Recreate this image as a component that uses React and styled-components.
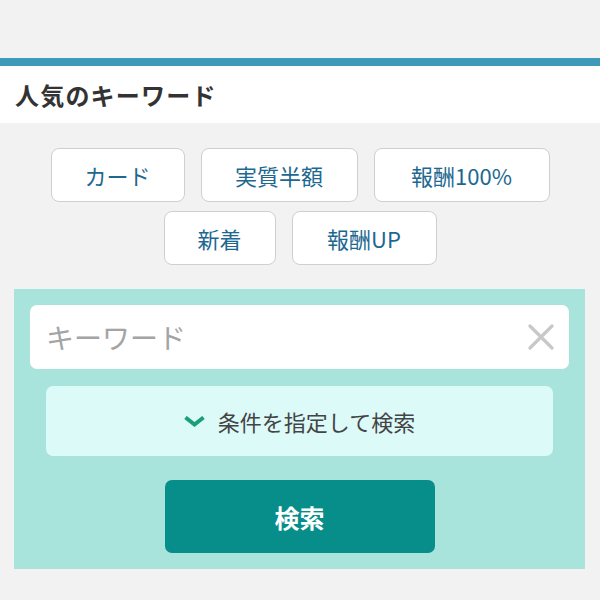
import React, { useState } from 'react';
import styled, { createGlobalStyle } from 'styled-components';

const GlobalStyle = createGlobalStyle`
  body {
    margin: 0;
    background: #f2f2f2;
    font-family: "Noto Sans CJK JP", "Noto Sans", sans-serif;
  }
`;

const Page = styled.div`
  padding-top: 58px;
  padding-bottom: 31px;
`;

const Header = styled.div`
  border-top: 8px solid #3f9aba;
  background: #fff;
  height: 57px;
  display: flex;
  align-items: center;
  padding-left: 15px;
`;

const Title = styled.h2`
  margin: 0;
  font-size: 24px;
  font-weight: 700;
  color: #333;
  letter-spacing: 1.2px;
`;

const TagList = styled.div`
  display: flex;
  flex-wrap: wrap;
  justify-content: center;
  gap: 9px 16px;
  padding: 25px 0 24px;
`;

const Tag = styled.a`
  display: flex;
  align-items: center;
  justify-content: center;
  width: ${(p) => p.$width}px;
  height: 54px;
  box-sizing: border-box;
  background: #fff;
  border: 1.5px solid #cfcfcf;
  border-radius: 8px;
  color: #1d6890;
  font-size: 22px;
  text-decoration: none;
`;

const Panel = styled.div`
  margin: 0 15px 0 14px;
  background: #a8e3dc;
  padding: 16px;
  display: flex;
  flex-direction: column;
  align-items: center;
`;

const InputBox = styled.div`
  align-self: stretch;
  height: 64px;
  background: #fff;
  border-radius: 7px;
  display: flex;
  align-items: center;
  padding: 0 15px 0 16px;
`;

const Input = styled.input`
  flex: 1;
  min-width: 0;
  border: none;
  outline: none;
  background: transparent;
  font-family: inherit;
  font-size: 28px;
  color: #333;
  padding: 0;
  &::placeholder {
    color: #a4a4a4;
  }
`;

const ClearButton = styled.button`
  border: none;
  background: none;
  padding: 0;
  width: 26px;
  height: 26px;
  display: flex;
  cursor: pointer;
`;

const Conditions = styled.button`
  align-self: stretch;
  margin: 17px 16px 0;
  height: 70px;
  border: none;
  border-radius: 7px;
  background: #dcfaf8;
  display: flex;
  align-items: center;
  justify-content: center;
  gap: 13px;
  font-family: inherit;
  font-size: 22px;
  color: #444;
  cursor: pointer;
`;

const SearchButton = styled.button`
  margin-top: 24px;
  width: 270px;
  height: 73px;
  border: none;
  border-radius: 7px;
  background: #078d8a;
  color: #fff;
  font-family: inherit;
  font-size: 25px;
  font-weight: 700;
  cursor: pointer;
`;

const keywords = [
  { label: 'カード', width: 134 },
  { label: '実質半額', width: 157 },
  { label: '報酬100%', width: 176 },
  { label: '新着', width: 112 },
  { label: '報酬UP', width: 145 },
];

export default function App() {
  const [keyword, setKeyword] = useState('');

  return (
    <Page>
      <GlobalStyle />
      <Header>
        <Title>人気のキーワード</Title>
      </Header>
      <TagList>
        {keywords.map((k) => (
          <Tag key={k.label} href="#" $width={k.width}>{k.label}</Tag>
        ))}
      </TagList>
      <Panel>
        <InputBox>
          <Input
            placeholder="キーワード"
            value={keyword}
            onChange={(e) => setKeyword(e.target.value)}
          />
          <ClearButton type="button" onClick={() => setKeyword('')}>
            <svg width="26" height="26" viewBox="0 0 26 26">
              <path d="M2 2 L24 24 M24 2 L2 24" stroke="#c8c8c8" strokeWidth="3.2" strokeLinecap="round" />
            </svg>
          </ClearButton>
        </InputBox>
        <Conditions type="button">
          <svg width="21" height="11" viewBox="0 0 21 11">
            <path d="M1.5 1.5 L10.5 8.5 L19.5 1.5" fill="none" stroke="#1a9e7e" strokeWidth="4" strokeLinejoin="miter" />
          </svg>
          条件を指定して検索
        </Conditions>
        <SearchButton type="submit">検索</SearchButton>
      </Panel>
    </Page>
  );
}
